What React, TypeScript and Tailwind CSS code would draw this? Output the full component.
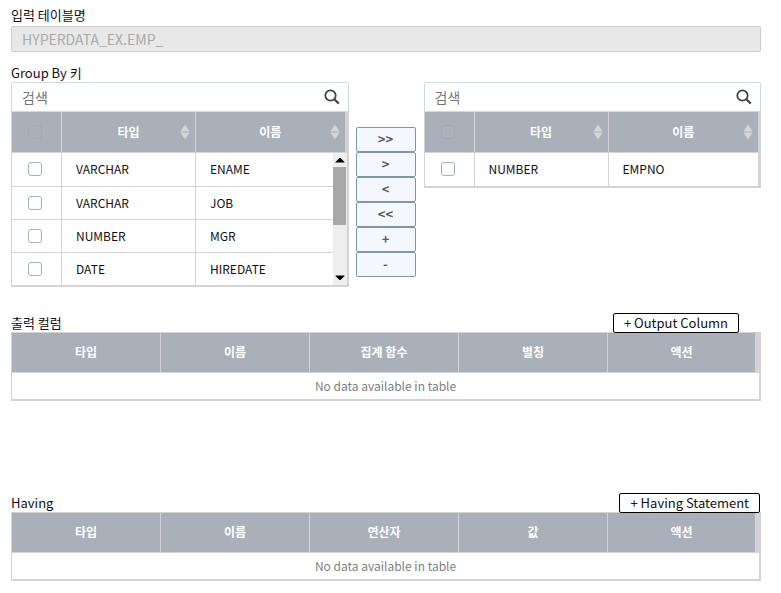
import { useState } from 'react';

type Row = { type: string; name: string };

const sourceRows: Row[] = [
  { type: 'VARCHAR', name: 'ENAME' },
  { type: 'VARCHAR', name: 'JOB' },
  { type: 'NUMBER', name: 'MGR' },
  { type: 'DATE', name: 'HIREDATE' },
];

const keyRows: Row[] = [{ type: 'NUMBER', name: 'EMPNO' }];

const moves = [
  { text: '>>', label: '모두 추가' },
  { text: '>', label: '추가' },
  { text: '<', label: '제거' },
  { text: '<<', label: '모두 제거' },
  { text: '+', label: '선택' },
  { text: '-', label: '해제' },
];

function SearchBox({ label }: { label: string }) {
  return (
    <div className="relative z-10 flex h-[30px] items-center rounded-xs border border-[#ced9e0] bg-white pr-2 pl-2.5">
      <input
        type="text"
        aria-label={label}
        placeholder="검색"
        className="h-full min-w-0 flex-1 bg-transparent text-sm text-[#333] outline-none placeholder:text-[#757575]"
      />
      <svg width="16" height="16" viewBox="0 0 16 16" fill="none" stroke="#444" aria-hidden="true">
        <circle cx="6.5" cy="6.5" r="5.2" strokeWidth="1.8" />
        <path d="M10.3 10.3 L14.8 14.6" strokeWidth="2.2" />
      </svg>
    </div>
  );
}

function SortIcon() {
  return (
    <svg width="10" height="16" viewBox="0 0 10 16" fill="#d6d6d6" aria-hidden="true">
      <path d="M5 0.5 L9.5 7.5 H0.5 Z" />
      <path d="M5 15.5 L9.5 8.5 H0.5 Z" />
    </svg>
  );
}

function Check({ label, disabled }: { label: string; disabled?: boolean }) {
  return (
    <input
      type="checkbox"
      aria-label={label}
      disabled={disabled}
      className="block size-3.5 appearance-none rounded-[3px] border border-[#a3b1bd] bg-white checked:bg-[#a3b1bd] disabled:border-[#9faab2] disabled:bg-transparent"
    />
  );
}

function Columns() {
  return (
    <colgroup>
      <col className="w-[50px]" />
      <col className="w-[134px]" />
      <col />
    </colgroup>
  );
}

function rowHeight(index: number, count: number) {
  if (index === count - 1) return count === 1 ? 'h-[33px]' : 'h-8';
  return index === 0 ? 'h-[34px]' : 'h-[33px]';
}

function PickTable({ rows, label, scroll }: { rows: Row[]; label: string; scroll?: boolean }) {
  return (
    <div className="-mt-px border-t border-b-2 border-l border-[#d3d3d3]">
      <div className={scroll ? 'border-r-4 border-[#d3d3d3]' : 'border-r-3 border-[#d3d3d3]'}>
        <table aria-label={label} className="w-full table-fixed border-separate border-spacing-0 bg-[#a9b0ba] text-xs text-white">
          <Columns />
          <thead>
            <tr className="h-[41px]">
              <th className="border-r border-b border-[#d3d3d3] pb-px pl-4">
                <Check label="전체 선택" disabled />
              </th>
              <th className="border-r border-b border-[#d3d3d3] px-[5px] font-bold">
                <div className="grid grid-cols-[10px_1fr_10px] items-center">
                  <span className="col-start-2">타입</span>
                  <SortIcon />
                </div>
              </th>
              <th className="border-b border-[#d3d3d3] px-[5px] font-bold">
                <div className="grid grid-cols-[10px_1fr_10px] items-center">
                  <span className="col-start-2">이름</span>
                  <SortIcon />
                </div>
              </th>
            </tr>
          </thead>
        </table>
      </div>
      <div className={scroll ? 'flex border-r-2 border-[#d3d3d3]' : 'flex border-r-3 border-[#d3d3d3]'}>
        <table aria-label={label} className="min-w-0 flex-1 table-fixed border-separate border-spacing-0 text-xs text-[#111]">
          <Columns />
          <tbody>
            {rows.map((row, i) => (
              <tr key={row.name} className={rowHeight(i, rows.length)}>
                <td className={i < rows.length - 1 ? 'border-r border-b border-[#d3d3d3] pb-px pl-4' : 'border-r border-[#d3d3d3] pb-px pl-4'}>
                  <Check label={row.name} />
                </td>
                <td className={i < rows.length - 1 ? 'border-r border-b border-[#d3d3d3] pb-px pl-3.5' : 'border-r border-[#d3d3d3] pb-px pl-3.5'}>{row.type}</td>
                <td className={i < rows.length - 1 ? 'border-b border-[#d3d3d3] pb-px pl-3.5' : 'pb-px pl-3.5'}>{row.name}</td>
              </tr>
            ))}
          </tbody>
        </table>
        {scroll && (
          <div className="flex w-3.5 flex-col items-center bg-[#eee]" aria-hidden="true">
            <svg width="14" height="14" viewBox="0 0 14 14">
              <path d="M2.5 9.5 H11.5 V9 L7.5 5 H6.5 L2.5 9 Z" fill="#000" />
            </svg>
            <div className="h-[58px] w-3.5 border-r border-[#eee] bg-[#a8a8a8]" />
            <svg width="14" height="14" viewBox="0 0 14 14" className="mt-auto">
              <path d="M2.5 4.5 H11.5 V5 L7.5 9 H6.5 L2.5 5 Z" fill="#000" />
            </svg>
          </div>
        )}
      </div>
    </div>
  );
}

function EmptyTable({ label, headers }: { label: string; headers: string[] }) {
  return (
    <table aria-label={label} className="w-full table-fixed border-separate border-spacing-0 border-t border-r-2 border-b-2 border-l border-[#d3d3d3] text-xs">
      <colgroup>
        {headers.map((h, i) => (
          <col key={h} className={i === headers.length - 1 ? 'w-[147px]' : undefined} />
        ))}
        <col className="w-1" />
      </colgroup>
      <thead>
        <tr className="h-10 bg-[#a9b0ba] text-white">
          {headers.map((h, i) => (
            <th key={h} className={i < headers.length - 1 ? 'border-r border-b border-[#d3d3d3] pb-0.5 font-bold' : 'border-b border-[#d3d3d3] pb-0.5 font-bold'}>
              {h}
            </th>
          ))}
          <td className="bg-[#d3d3d3]" />
        </tr>
      </thead>
      <tbody>
        <tr className="h-[26px]">
          <td colSpan={headers.length + 1} className="text-center text-[#808080]">
            No data available in table
          </td>
        </tr>
      </tbody>
    </table>
  );
}

function AddButton({ text }: { text: string }) {
  return (
    <button type="button" className="h-5 rounded-xs border border-black bg-white px-2.5 text-[13px] leading-[18px] text-[#111]">
      {text}
    </button>
  );
}

export default function App() {
  const [tableName] = useState('HYPERDATA_EX.EMP_');
  return (
    <main className="bg-white pt-[5px] pr-5 pl-[11px] font-['Noto_Sans_CJK_KR',sans-serif] text-[13px] leading-5 text-[#111]">
      <label htmlFor="table-name" className="mb-px block">
        입력 테이블명
      </label>
      <input
        id="table-name"
        type="text"
        value={tableName}
        disabled
        className="block h-[26px] w-full rounded-xs border border-[#ccc] bg-[#e8e8e8] px-2.5 text-sm text-[#aaa]"
      />

      <section className="mt-[11px]">
        <h2>Group By 키</h2>
        <div className="-mt-px flex items-start">
          <div className="min-w-0 flex-1">
            <SearchBox label="컬럼 검색" />
            <PickTable rows={sourceRows} label="컬럼" scroll />
          </div>
          <div className="mt-[45px] mr-2 ml-[7px] flex w-[60px] flex-col">
            {moves.map((m) => (
              <button
                key={m.text}
                type="button"
                aria-label={m.label}
                className="h-[25px] rounded-xs border border-[#7f97a3] bg-[#f4f8fc] pb-0.5 text-[13px] leading-5 font-bold text-[#5c5c5c]"
              >
                {m.text}
              </button>
            ))}
          </div>
          <div className="min-w-0 flex-1">
            <SearchBox label="키 검색" />
            <PickTable rows={keyRows} label="키" />
          </div>
        </div>
      </section>

      <section className="mt-[26px]">
        <div className="flex h-[19px] items-start justify-between pr-[22px]">
          <h2>출력 컬럼</h2>
          <AddButton text="+ Output Column" />
        </div>
        <EmptyTable label="출력 컬럼" headers={['타입', '이름', '집계 함수', '별칭', '액션']} />
      </section>

      <section className="mt-[92px] mb-3">
        <div className="flex h-[19px] items-start justify-between pr-px">
          <h2>Having</h2>
          <AddButton text="+ Having Statement" />
        </div>
        <EmptyTable label="Having" headers={['타입', '이름', '연산자', '값', '액션']} />
      </section>
    </main>
  );
}
